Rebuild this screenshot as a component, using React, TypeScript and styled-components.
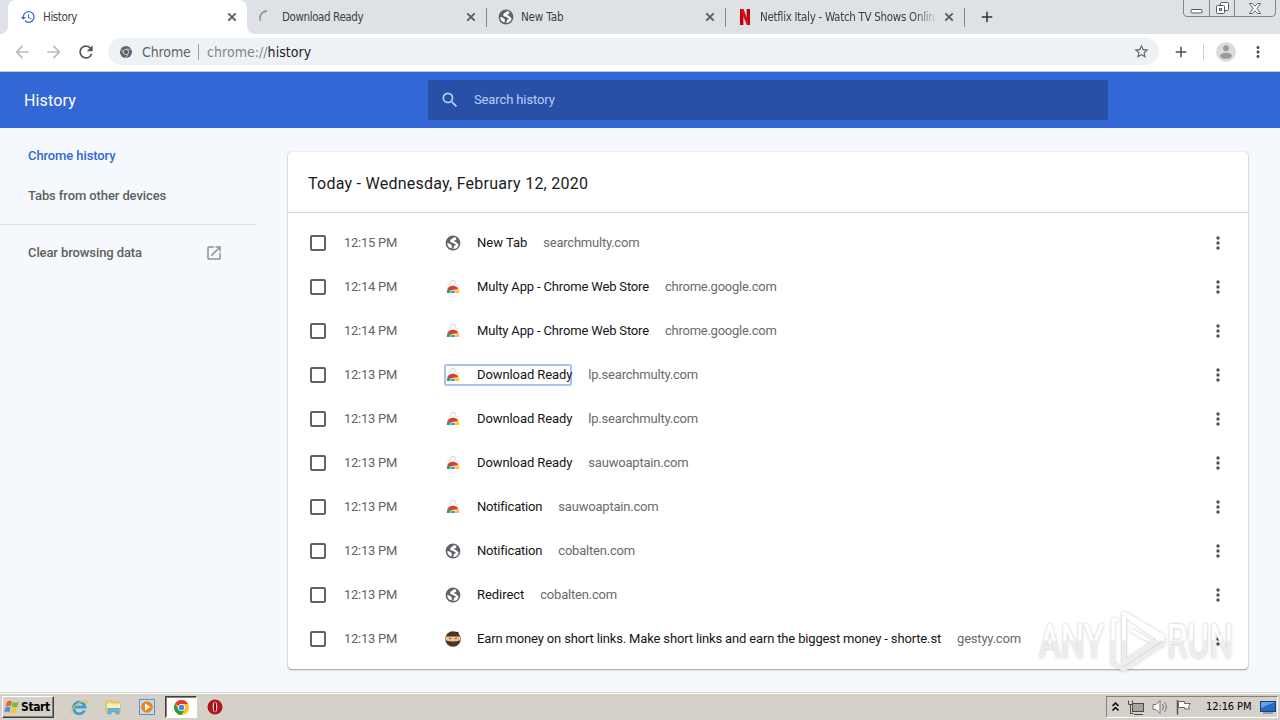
import React from "react";
import styled, { createGlobalStyle } from "styled-components";
import {
  MdHistory, MdSearch, MdOpenInNew, MdArrowBack, MdArrowForward, MdRefresh,
  MdStarBorder, MdMoreVert, MdAdd,
} from "react-icons/md";

const UI = '"DejaVu Sans Condensed", "DejaVu Sans", sans-serif';

const Global = createGlobalStyle`
  * { box-sizing: border-box; }
  body { margin: 0; overflow: hidden; font-family: Roboto, sans-serif; }
  svg { display: block; flex: none; }
`;

const Screen = styled.div`
  width: 1280px;
  height: 720px;
  display: flex;
  flex-direction: column;
  position: relative;
  background: #f5f8fc;
  overflow: hidden;
`;

/* Tab strip */
const TabStrip = styled.div`
  height: 34px;
  flex: none;
  display: flex;
  padding-left: 8px;
  background: #dee1e6;
`;
const Tab = styled.div<{ $active?: boolean }>`
  width: 239px;
  height: 34px;
  display: flex;
  align-items: center;
  padding: 0 8px 0 12px;
  position: relative;
  background: ${(p) => (p.$active ? "#fff" : "transparent")};
  border-radius: 8px 8px 0 0;
  color: #45494d;
  &::after {
    content: "";
    position: absolute;
    right: -1px;
    top: 8px;
    width: 1px;
    height: 19px;
    background: ${(p) => (p.$active ? "transparent" : "#85888c")};
  }
`;
const TabCurve = styled.svg<{ $side: "left" | "right" }>`
  position: absolute;
  bottom: 0;
  ${(p) => p.$side}: -8px;
`;
const TabIcon = styled.div`
  width: 16px;
  height: 16px;
  flex: none;
  display: flex;
  align-items: center;
  justify-content: center;
`;
const TabTitle = styled.div<{ $fade?: boolean; $track: number }>`
  width: 179px;
  flex: none;
  margin: 0 5px 0 7px;
  font: 11.5px/16px ${UI};
  letter-spacing: ${(p) => p.$track}px;
  white-space: nowrap;
  color: #3c4043;
  ${(p) => p.$fade && "mask-image: linear-gradient(90deg, #000 155px, transparent 178px);"}
`;
const NewTabButton = styled.div`
  width: 46px;
  display: flex;
  align-items: center;
  justify-content: center;
  color: #303338;
`;
const WindowButtons = styled.div`
  margin: -1px 4px 0 auto;
  width: 93px;
  height: 18px;
  display: flex;
  border: 1px solid #83868c;
  border-radius: 0 0 4px 4px;
`;
const WindowButton = styled.div<{ $w: number }>`
  width: ${(p) => p.$w}px;
  display: flex;
  align-items: center;
  justify-content: center;
  & + & { border-left: 1px solid #83868c; }
`;

/* Toolbar */
const Toolbar = styled.div`
  height: 38px;
  flex: none;
  display: flex;
  align-items: center;
  padding: 0 12px 2px 12px;
  background: #fff;
  border-bottom: 1px solid #c3cad6;
`;
const NavButton = styled.div<{ $dim?: boolean }>`
  width: 32px;
  display: flex;
  color: ${(p) => (p.$dim ? "#b9bbbe" : "#54585c")};
`;
const Omnibox = styled.div`
  width: 1051px;
  height: 27px;
  display: flex;
  align-items: center;
  padding: 0 9px 0 12px;
  border-radius: 14px;
  background: #eff2f5;
  color: #5f6368;
`;
const SchemeLabel = styled.div`
  width: 57px;
  padding-left: 10px;
  font: 14px/18px ${UI};
  letter-spacing: -0.1px;
  color: #5f6368;
  white-space: nowrap;
`;
const Divider = styled.div<{ $gap: string; $h: number; $c: string }>`
  width: 1px;
  height: ${(p) => p.$h}px;
  margin: ${(p) => p.$gap};
  background: ${(p) => p.$c};
`;
const Address = styled.div`
  flex: 1;
  font: 14px/18px ${UI};
  letter-spacing: 0.04px;
  color: #202124;
  span { color: #80868b; }
`;
const ToolbarActions = styled.div`
  flex: 1;
  display: flex;
  align-items: center;
  padding-left: 13px;
  color: #4b4f53;
`;

/* Page header */
const Header = styled.div`
  height: 56px;
  flex: none;
  display: flex;
  align-items: center;
  padding-left: 24px;
  background: #3367d6;
`;
const HeaderTitle = styled.div`
  width: 404px;
  font-size: 16px;
  line-height: 20px;
  letter-spacing: 0.15px;
  color: #fff;
  padding-top: 2px;
`;
const SearchBox = styled.div`
  width: 680px;
  height: 40px;
  display: flex;
  align-items: center;
  gap: 14px;
  padding-left: 12px;
  background: #2950a7;
  color: #b9cef5;
  font-size: 13px;
  letter-spacing: -0.12px;
  span { padding-bottom: 2px; }
`;

/* Page body */
const Body = styled.div`
  flex: 1;
  display: flex;
`;
const Sidebar = styled.div`
  width: 256px;
  padding-top: 8px;
`;
const SideItem = styled.div<{ $active?: boolean }>`
  height: 40px;
  display: flex;
  align-items: center;
  justify-content: space-between;
  padding: 0 33px 2px 28px;
  font-size: 13px;
  font-weight: 500;
  letter-spacing: -0.1px;
  color: ${(p) => (p.$active ? "#3367d6" : "#5f5f5f")};
  svg { color: #8e9195; margin-top: 1px; }
`;
const SideRule = styled.div`
  height: 1px;
  margin: 8px 0;
  background: #dfe3e7;
`;
const Card = styled.div`
  width: 960px;
  height: 517px;
  margin: 24px 0 0 32px;
  background: #fff;
  border-radius: 4px;
  box-shadow: 0 1px 2px rgba(0, 0, 0, 0.35), 0 0 1px rgba(0, 0, 0, 0.25);
`;
const CardTitle = styled.div`
  height: 61px;
  padding: 21px 20px 0;
  border-bottom: 1px solid #d4d4d4;
  margin-bottom: 8px;
  font-size: 16px;
  line-height: 22px;
  letter-spacing: 0.25px;
  color: #1b1b1b;
`;
const Row = styled.div`
  height: 44px;
  display: flex;
  align-items: center;
  padding: 0 20px 0 22px;
  font-size: 13px;
  line-height: 16px;
  white-space: nowrap;
`;
const Checkbox = styled.div`
  width: 16px;
  height: 16px;
  border: 2px solid #606266;
  border-radius: 2px;
`;
const Time = styled.div`
  width: 100px;
  margin-left: 18px;
  color: #646464;
  letter-spacing: -0.27px;
`;
const Entry = styled.div<{ $focused?: boolean }>`
  height: 22px;
  display: flex;
  align-items: center;
  padding-left: 1px;
  border-radius: 2px;
  box-shadow: ${(p) => (p.$focused ? "inset 0 0 0 2px #aac3f3" : "none")};
`;
const EntryTitle = styled.div<{ $track: number }>`
  margin-left: 16px;
  letter-spacing: ${(p) => p.$track}px;
  color: #151515;
`;
const Domain = styled.div<{ $track: number }>`
  margin-left: 16px;
  letter-spacing: ${(p) => p.$track}px;
  color: #6b6b6b;
`;
const RowMenu = styled.div`
  margin-left: auto;
  color: #505357;
`;
const Watermark = styled.svg`
  position: absolute;
  left: 1030px;
  top: 601px;
`;

/* Taskbar */
const Taskbar = styled.div`
  height: 28px;
  flex: none;
  display: flex;
  align-items: center;
  padding: 1px 0 0 2px;
  background: #d5d0c8;
  border-top: 1px solid #d5d0c8;
  box-shadow: inset 0 1px 0 #fff;
`;
const StartButton = styled.div`
  width: 52px;
  height: 22px;
  display: flex;
  align-items: center;
  gap: 1px;
  padding-left: 1px;
  border: 1px solid;
  border-color: #fff #404040 #404040 #fff;
  box-shadow: inset -1px -1px 0 #868279;
  font: bold 12px/16px ${UI};
  letter-spacing: -0.4px;
  color: #000;
`;
const QuickLaunch = styled.div`
  display: flex;
  align-items: center;
  margin-left: 8px;
`;
const Launcher = styled.div<{ $pressed?: boolean }>`
  width: ${(p) => (p.$pressed ? 32 : 34)}px;
  height: 22px;
  margin: ${(p) => (p.$pressed ? "0 1px" : "0")};
  display: flex;
  align-items: center;
  justify-content: center;
  ${(p) => p.$pressed && "background: #fff; border: 1px solid; border-color: #404040 #fff #fff #404040; box-shadow: inset 1px 1px 0 #868279;"}
`;
const Tray = styled.div`
  width: 172px;
  height: 22px;
  margin: 0 2px 0 auto;
  display: flex;
  align-items: center;
  padding: 0 1px 0 4px;
  border: 1px solid;
  border-color: #868279 #fff #fff #868279;
`;
const TrayIcons = styled.div`
  display: flex;
  align-items: center;
  gap: 7px;
`;
const Clock = styled.div`
  width: 53px;
  margin: 0 1px 0 auto;
  font: 11px/14px ${UI};
  letter-spacing: -0.1px;
  white-space: nowrap;
  color: #000;
`;

const Globe = ({ size = 16 }: { size?: number }) => (
  <svg width={size} height={size} viewBox="0 0 16 16">
    <circle cx="8" cy="8" r="7.400" fill="#5f6368" />
    <path d="M9.500 2.100L7.300 3.600Q4.200 5.300 5.700 7.300L8.600 7.900Q9.100 9.600 10.900 9.200 11.300 10.300 9.200 10.800L8.100 13.900Q12.500 14 13.700 9.400L12.400 8.600Q11.700 6.800 9 6.300 8.800 5.300 10.700 5 11.600 4.300 11.300 3z" fill="#fff" />
    <path d="M2.200 7.900Q2.400 12.200 6.400 13.600L6.900 11.600Q7.500 10.300 5.900 9.700 5.300 8.200 3.600 8.200z" fill="#fff" />
  </svg>
);

const WebStore = () => (
  <svg width="16" height="16" viewBox="0 0 16 16">
    <path d="M2.500 4.500h11l.9 9.500H1.600z" fill="#f3f3f3" />
    <path d="M5.800 4.700V3.300a2.200 2 0 0 1 4.400 0v1.400" fill="none" stroke="#d3d6d8" strokeWidth="1" />
    <path d="M1.700 14A6.300 6.800 0 0 1 3.300 9L7 11v3z" fill="#30a852" />
    <path d="M2.500 10C4.500 5.700 11.200 5.500 13.300 10L8 11.800z" fill="#dc3b36" />
    <path d="M13.200 9.900L8 10.800 9 14h5.300c0-1.600-.3-3-1.100-4.100z" fill="#fbcb1d" />
    <path d="M5.200 14a2.800 3.100 0 0 1 5.600 0z" fill="#fff" />
    <path d="M5.700 14a2.300 2.500 0 0 1 4.600 0z" fill="#4b87ee" />
  </svg>
);

const Ninja = () => (
  <svg width="16" height="16" viewBox="0 0 16 16">
    <circle cx="8" cy="8" r="7.800" fill="#4b3529" />
    <path d="M.6 5.600h14.800v3.600q-7.400 2.500-14.800 0z" fill="#eac58b" />
    <path d="M4 7.200l2 .4M10 7.600l2-.4" stroke="#7b593d" strokeWidth="1" />
    <path d="M10.500 1.500l3-1-.4 3z" fill="#35241c" />
  </svg>
);

const ChromeMark = ({ mono = false }: { mono?: boolean }) =>
  mono ? (
    <svg width="12" height="12" viewBox="0 0 16 16">
      <circle cx="8" cy="8" r="8" fill="#5f6368" />
      <circle cx="8" cy="8" r="3.600" fill="none" stroke="#dfe1e4" strokeWidth="1" />
      <path d="M8 4.300h7M4.800 9.900L1.400 4M11.200 9.900L7.800 16" stroke="#dfe1e4" strokeWidth=".9" />
    </svg>
  ) : (
    <svg width="15" height="15" viewBox="0 0 16 16">
      <circle cx="8" cy="8" r="8" fill="#fbc116" />
      <path d="M8 8L1.100 4A8 8 0 0 1 15 4.200H8z" fill="#e33b2e" />
      <path d="M1.100 4A8 8 0 0 0 7.700 16l3.700-6L8 8 4.700 9.900z" fill="#269b49" />
      <circle cx="8" cy="8" r="3.800" fill="#fff" />
      <circle cx="8" cy="8" r="2.900" fill="#4285f4" />
    </svg>
  );

type Site = "globe" | "store" | "ninja";
const siteIcon = { globe: <Globe />, store: <WebStore />, ninja: <Ninja /> };
interface Visit { time: string; site: Site; title: string; domain: string; t: number; d: number; focused?: boolean }
const visits: Visit[] = [
  { time: "12:15 PM", site: "globe", title: "New Tab", domain: "searchmulty.com", t: 0, d: -0.23 },
  { time: "12:14 PM", site: "store", title: "Multy App - Chrome Web Store", domain: "chrome.google.com", t: -0.16, d: -0.25 },
  { time: "12:14 PM", site: "store", title: "Multy App - Chrome Web Store", domain: "chrome.google.com", t: -0.16, d: -0.25 },
  { time: "12:13 PM", site: "store", title: "Download Ready", domain: "lp.searchmulty.com", t: -0.09, d: -0.2, focused: true },
  { time: "12:13 PM", site: "store", title: "Download Ready", domain: "lp.searchmulty.com", t: -0.09, d: -0.2 },
  { time: "12:13 PM", site: "store", title: "Download Ready", domain: "sauwoaptain.com", t: -0.09, d: -0.2 },
  { time: "12:13 PM", site: "store", title: "Notification", domain: "sauwoaptain.com", t: -0.2, d: -0.2 },
  { time: "12:13 PM", site: "globe", title: "Notification", domain: "cobalten.com", t: -0.2, d: -0.2 },
  { time: "12:13 PM", site: "globe", title: "Redirect", domain: "cobalten.com", t: -0.05, d: -0.2 },
  { time: "12:13 PM", site: "ninja", title: "Earn money on short links. Make short links and earn the biggest money - shorte.st", domain: "gestyy.com", t: -0.152, d: -0.2 },
];

const AnyRun = () => (
  <Watermark width="212" height="76" viewBox="0 0 212 76">
    <defs>
      <filter id="soft" x="-10%" y="-10%" width="120%" height="120%">
        <feDropShadow dx="0" dy="0" stdDeviation="1.500" floodColor="#000" floodOpacity=".28" />
      </filter>
      <linearGradient id="fade" x1="0" y1="0" x2="0" y2="76" gradientUnits="userSpaceOnUse">
        <stop offset=".51" stopColor="#fff" />
        <stop offset=".53" stopColor="#ededed" />
      </linearGradient>
    </defs>
    <g filter="url(#soft)" fill="url(#fade)" fontFamily="Roboto, sans-serif" fontSize="49">
      <text x="9" y="57" textLength="65" lengthAdjust="spacingAndGlyphs">ANY</text>
      <text x="137" y="57" textLength="66" lengthAdjust="spacingAndGlyphs">RUN</text>
      <g fill="none" stroke="url(#fade)" strokeWidth="4" strokeLinejoin="round">
        <path d="M94 13v49l36-24z" />
        <path d="M94 12l39 23v8L94 69M88 19h-5v44l11 6M101 29l22 13" strokeWidth="3" />
      </g>
    </g>
  </Watermark>
);

const Close = () => (
  <svg width="10" height="10" viewBox="0 0 10 10">
    <path d="M1.300 1.300l7.400 7.400M8.700 1.300L1.300 8.700" stroke="#5a5d62" strokeWidth="1.900" />
  </svg>
);

export default function App() {
  return (
    <Screen>
      <Global />
      <TabStrip>
        <Tab $active>
          <TabCurve $side="left" width="8" height="8"><path d="M8 0v8H0a8 8 0 0 0 8-8z" fill="#fff" /></TabCurve>
          <TabIcon><MdHistory size={16} color="#3367d6" /></TabIcon>
          <TabTitle $track={-0.4}>History</TabTitle>
          <Close />
          <TabCurve $side="right" width="8" height="8"><path d="M0 0v8h8a8 8 0 0 1-8-8z" fill="#fff" /></TabCurve>
        </Tab>
        <Tab>
          <TabIcon>
            <svg width="16" height="16"><path d="M1.800 12A7 7 0 0 1 8 2" fill="none" stroke="#9c9fa4" strokeWidth="2" /></svg>
          </TabIcon>
          <TabTitle $track={-0.4}>Download Ready</TabTitle>
          <Close />
        </Tab>
        <Tab>
          <TabIcon><Globe /></TabIcon>
          <TabTitle $track={-0.12}>New Tab</TabTitle>
          <Close />
        </Tab>
        <Tab>
          <TabIcon>
            <svg width="16" height="16">
              <path d="M3 0h3.400v16L3 15.900zM9.700 0H13v15.900L9.700 16z" fill="#b1060f" />
              <path d="M3 0h3.400L13 15.900 9.700 15.500z" fill="#e50914" />
            </svg>
          </TabIcon>
          <TabTitle $fade $track={-0.3}>Netflix Italy - Watch TV Shows Onlin</TabTitle>
          <Close />
        </Tab>
        <NewTabButton><MdAdd size={18} /></NewTabButton>
        <WindowButtons>
          <WindowButton $w={25}>
            <svg width="13" height="16"><rect x="1" y="9.500" width="11" height="3.500" rx="1" fill="#fff" stroke="#54585f" /></svg>
          </WindowButton>
          <WindowButton $w={25}>
            <svg width="13" height="14" fill="#fff" stroke="#54585f">
              <rect x="4.500" y="1.500" width="8" height="8" rx="1" />
              <rect x=".5" y="4.500" width="8" height="8" rx="1" />
              <rect x="3.500" y="7.500" width="2" height="2" />
            </svg>
          </WindowButton>
          <WindowButton $w={41}>
            <svg width="12" height="11">
              <path d="M.5.5h3L6 3.300 8.500.5h3L8 5.500l3.500 5h-3L6 7.700 3.500 10.500h-3L4 5.500z" fill="#fff" stroke="#54585f" strokeWidth=".9" />
            </svg>
          </WindowButton>
        </WindowButtons>
      </TabStrip>

      <Toolbar>
        <NavButton $dim><MdArrowBack size={20} /></NavButton>
        <NavButton $dim><MdArrowForward size={20} /></NavButton>
        <NavButton><MdRefresh size={20} /></NavButton>
        <Omnibox>
          <ChromeMark mono />
          <SchemeLabel>Chrome</SchemeLabel>
          <Divider $gap="0 8px 0 9px" $h={16} $c="#9b9ea2" />
          <Address><span>chrome://</span>history</Address>
          <MdStarBorder size={17} />
        </Omnibox>
        <ToolbarActions>
          <MdAdd size={18} />
          <Divider $gap="0 12px 0 13px" $h={16} $c="#cfd1d4" />
          <svg width="20" height="20">
            <circle cx="10" cy="10" r="10" fill="#dcdcdc" />
            <circle cx="10" cy="6.300" r="3" fill="#9b9b9b" />
            <ellipse cx="10" cy="13.800" rx="6" ry="3" fill="#9b9b9b" />
          </svg>
          <Divider $gap="0 6px" $h={1} $c="transparent" />
          <MdMoreVert size={18} />
        </ToolbarActions>
      </Toolbar>

      <Header>
        <HeaderTitle>History</HeaderTitle>
        <SearchBox><MdSearch size={20} /><span>Search history</span></SearchBox>
      </Header>

      <Body>
        <Sidebar>
          <SideItem $active>Chrome history</SideItem>
          <SideItem>Tabs from other devices</SideItem>
          <SideRule />
          <SideItem>Clear browsing data<MdOpenInNew size={18} /></SideItem>
        </Sidebar>
        <Card>
          <CardTitle>Today - Wednesday, February 12, 2020</CardTitle>
          {visits.map((v, i) => (
            <Row key={i}>
              <Checkbox />
              <Time>{v.time}</Time>
              <Entry $focused={v.focused}>
                {siteIcon[v.site]}
                <EntryTitle $track={v.t}>{v.title}</EntryTitle>
              </Entry>
              <Domain $track={v.d}>{v.domain}</Domain>
              <RowMenu><MdMoreVert size={20} /></RowMenu>
            </Row>
          ))}
        </Card>
      </Body>
      <AnyRun />

      <Taskbar>
        <StartButton>
          <svg width="16" height="16" viewBox="0 0 16 16">
            <path d="M3 2.500q2.500-1.500 5 0L6.700 7.300q-2.500-1.300-5 .2z" fill="#e8632b" />
            <path d="M8.800 2.900q2.800 1.500 6-.1l-1.500 4.900q-2.900 1.500-5.700-.1z" fill="#7cb93b" />
            <path d="M1.500 8.500q2.500-1.500 5-.2l-1.300 4.900q-2.500-1.500-5 0z" fill="#4b8ddb" />
            <path d="M7.300 8.700q2.900 1.500 5.700.1l-1.400 4.900q-2.800 1.500-5.700-.1z" fill="#f6c638" />
          </svg>
          Start
        </StartButton>
        <QuickLaunch>
          <Launcher>
            <svg width="18" height="18" viewBox="0 0 18 18" fill="none">
              <path d="M14.500 12.500A5.800 5.800 0 1 1 15 9H5" stroke="#36a0dc" strokeWidth="2.800" />
              <path d="M2 15.500C-.5 12 11 1 16.500 2.500c1.200.8 0 2.500-.8 3.500" stroke="#e9c33d" strokeWidth="1.300" />
            </svg>
          </Launcher>
          <Launcher>
            <svg width="17" height="16">
              <path d="M1 2h5l1 1h8v10H1z" fill="#f0d878" stroke="#d0b04e" strokeWidth=".7" />
              <path d="M2 5h13v4H2z" fill="#fbf0b8" />
              <path d="M3 15V9.500h11V15h-3v-2.500H6V15z" fill="#69b6e4" stroke="#4a93c4" strokeWidth=".6" />
            </svg>
          </Launcher>
          <Launcher>
            <svg width="16" height="16">
              <rect x=".5" y=".5" width="15" height="15" fill="#c4dcf2" stroke="#5e92c6" />
              <circle cx="8" cy="8" r="5.800" fill="#ee8317" />
              <path d="M6 4.500v7L11.500 8z" fill="#fff" />
            </svg>
          </Launcher>
          <Launcher $pressed><ChromeMark /></Launcher>
          <Launcher>
            <svg width="16" height="16">
              <circle cx="8" cy="8" r="7.500" fill="#b01519" />
              <ellipse cx="8" cy="8" rx="2.300" ry="5.300" fill="#f4dcdc" />
              <ellipse cx="8" cy="8" rx="1.100" ry="5" fill="#8d0b0e" />
            </svg>
          </Launcher>
        </QuickLaunch>
        <Tray>
          <TrayIcons>
            <svg width="9" height="12" fill="none" stroke="#000" strokeWidth="1.500"><path d="M1.500 5L4.500 2l3 3M1.500 9.500l3-3 3 3" /></svg>
            <svg width="18" height="16">
              <rect x="5.500" y="4.500" width="11" height="8" fill="#a5a5a0" stroke="#4a4a4a" />
              <path d="M7 15.500h9" stroke="#4a4a4a" />
              <path d="M1.500 1.500v4h4v-4M3.500 6v8.500h3" fill="none" stroke="#4a4a4a" />
            </svg>
            <svg width="17" height="16" fill="none" stroke="#777">
              <path d="M1 5.500h3L8 1.500v13l-4-4H1z" fill="#f5f5f5" />
              <path d="M10.500 5q2 3 0 6M12.500 3q3.500 5 0 10" />
            </svg>
            <svg width="17" height="16">
              <path d="M1.500 1v14.500" stroke="#555" strokeWidth="1.500" />
              <path d="M2.500 2.500h6v2h6l-2 3 1 2.500h-5V8.500h-6z" fill="#fff" stroke="#666" />
            </svg>
          </TrayIcons>
          <Clock>12:16 PM</Clock>
          <svg width="16" height="14">
            <rect x=".5" y="1.500" width="15" height="10" fill="#2469c6" stroke="#17407f" />
            <path d="M1 2h14L1 8z" fill="#66a1e6" />
            <path d="M3 13h10" stroke="#5e6e85" />
          </svg>
        </Tray>
      </Taskbar>
    </Screen>
  );
}
